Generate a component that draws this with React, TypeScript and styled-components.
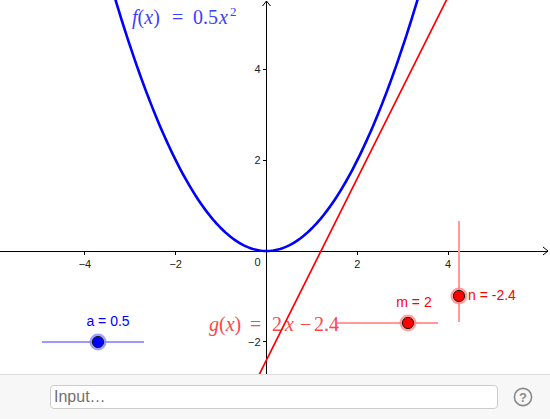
import styled, { createGlobalStyle } from "styled-components";

const GlobalStyle = createGlobalStyle`
  html, body {
    margin: 0;
    padding: 0;
    background: #ffffff;
  }
  body {
    font-family: "Liberation Sans", Arial, sans-serif;
  }
`;

// graphics view coordinate system
const W = 550;
const H = 374;
const OX = 266.5;
const OY = 251;
const U = 45.4;

const px = (x: number) => OX + x * U;
const py = (y: number) => OY - y * U;

const parabolaPath = () => {
  const pts: string[] = [];
  for (let x = -3.5; x <= 3.5001; x += 0.05) {
    pts.push(`${px(x).toFixed(2)},${py(0.5 * x * x).toFixed(2)}`);
  }
  return "M" + pts.join(" L");
};

const xTicks = [-4, -2, 2, 4];
const yTicks = [4, 2, -2];

const label = (n: number) => (n < 0 ? `\u2212${-n}` : `${n}`);

export default function App() {
  return (
    <>
      <GlobalStyle />
      <Applet>
        <GraphicsView>
          <Canvas width={W} height={H} viewBox={`0 0 ${W} ${H}`}>
            {/* axes */}
            <AxisLine x1={0} y1={OY} x2={W - 2} y2={OY} />
            <AxisLine x1={OX} y1={H} x2={OX} y2={1} />
            <AxisArrow d={`M${W - 7},${OY - 4} L${W - 2},${OY} L${W - 7},${OY + 4}`} />
            <AxisArrow d={`M${OX - 4},6 L${OX},1 L${OX + 4},6`} />

            {xTicks.map((t) => (
              <g key={`x${t}`}>
                <AxisLine x1={px(t)} y1={OY} x2={px(t)} y2={OY + 4} />
                <TickLabel x={px(t)} y={OY + 17} textAnchor="middle">
                  {label(t)}
                </TickLabel>
              </g>
            ))}
            {yTicks.map((t) => (
              <g key={`y${t}`}>
                <AxisLine x1={OX - 4} y1={py(t)} x2={OX} y2={py(t)} />
                <TickLabel x={OX - 6} y={py(t) + 4} textAnchor="end">
                  {label(t)}
                </TickLabel>
              </g>
            ))}
            <TickLabel x={OX - 6} y={OY + 15} textAnchor="end">
              0
            </TickLabel>

            {/* f(x) = 0.5 x^2 */}
            <Curve d={parabolaPath()} $color="#0000ff" $width={2.6} />
            <MathLabel y={24} $color="#3d3dff">
              <tspan x={132} fontStyle="italic">f</tspan>
              <tspan>(</tspan>
              <tspan fontStyle="italic">x</tspan>
              <tspan>)</tspan>
              <tspan x={172}>=</tspan>
              <tspan x={193}>0.5</tspan>
              <tspan x={219} fontStyle="italic">x</tspan>
              <tspan x={230} fontSize="13" dy="-8">
                2
              </tspan>
            </MathLabel>

            {/* g(x) = m x + n */}
            <MathLabel y={331} $color="#ff4545">
              <tspan x={209} fontStyle="italic">g</tspan>
              <tspan>(</tspan>
              <tspan fontStyle="italic">x</tspan>
              <tspan>)</tspan>
              <tspan x={250}>=</tspan>
              <tspan x={272}>2</tspan>
              <tspan x={285} fontStyle="italic">x</tspan>
              <tspan x={300}>−</tspan>
              <tspan x={314}>2.4</tspan>
            </MathLabel>
            <Curve
              d={`M${px(4.05)},${py(2 * 4.05 - 2.4)} L${px(-0.25)},${py(2 * -0.25 - 2.4)}`}
              $color="#ff0000"
              $width={1.7}
            />

            {/* slider a */}
            <SliderTrack x1={42} y1={342} x2={144} y2={342} $color="#9a9aff" />
            <SliderHalo cx={98} cy={342} r={8.5} $color="#7f7fff" />
            <SliderKnob cx={98} cy={342} r={5.6} $color="#0000ff" />
            <SliderLabel x={108} y={326} textAnchor="middle" $color="#0000ff">
              a = 0.5
            </SliderLabel>

            {/* slider m */}
            <SliderTrack x1={337} y1={323} x2={438} y2={323} $color="#ff9a9a" />
            <SliderHalo cx={408} cy={323} r={8.5} $color="#ff7f7f" />
            <SliderKnob cx={408} cy={323} r={5.6} $color="#ff0000" />
            <SliderLabel x={414} y={307} textAnchor="middle" $color="#ff0000">
              m = 2
            </SliderLabel>

            {/* slider n */}
            <SliderTrack x1={459} y1={221} x2={459} y2={322} $color="#ff9a9a" />
            <SliderHalo cx={459} cy={296} r={8.5} $color="#ff7f7f" />
            <SliderKnob cx={459} cy={296} r={5.6} $color="#ff0000" />
            <SliderLabel x={468} y={300} $color="#ff0000">
              n = -2.4
            </SliderLabel>
          </Canvas>
        </GraphicsView>

        <InputBar>
          <InputField type="text" placeholder="Input…" />
          <HelpButton aria-label="help">
            <svg width="20" height="20" viewBox="0 0 20 20">
              <circle cx="10" cy="10" r="8.6" fill="none" stroke="#8a8a8a" strokeWidth="1.6" />
              <text
                x="10"
                y="14.6"
                textAnchor="middle"
                fontSize="13"
                fontWeight="bold"
                fill="#8a8a8a"
                fontFamily="Liberation Sans, Arial, sans-serif"
              >
                ?
              </text>
            </svg>
          </HelpButton>
        </InputBar>
      </Applet>
    </>
  );
}

const Applet = styled.div`
  width: 550px;
  height: 419px;
  display: flex;
  flex-direction: column;
  overflow: hidden;
  background: #ffffff;
`;

const GraphicsView = styled.div`
  height: 374px;
  flex-shrink: 0;
  overflow: hidden;
`;

const Canvas = styled.svg`
  display: block;
`;

const AxisLine = styled.line`
  stroke: #000000;
  stroke-width: 1;
  shape-rendering: crispEdges;
`;

const AxisArrow = styled.path`
  fill: none;
  stroke: #000000;
  stroke-width: 1;
`;

const TickLabel = styled.text`
  font-family: "Liberation Sans", Arial, sans-serif;
  font-size: 11px;
  fill: #222222;
`;

const Curve = styled.path<{ $color: string; $width: number }>`
  fill: none;
  stroke: ${(p) => p.$color};
  stroke-width: ${(p) => p.$width};
  stroke-linecap: round;
`;

const MathLabel = styled.text<{ $color: string }>`
  font-family: "Liberation Serif", "Times New Roman", serif;
  font-size: 20px;
  fill: ${(p) => p.$color};
`;

const SliderTrack = styled.line<{ $color: string }>`
  stroke: ${(p) => p.$color};
  stroke-width: 2;
`;

const SliderHalo = styled.circle<{ $color: string }>`
  fill: ${(p) => p.$color};
  opacity: 0.75;
`;

const SliderKnob = styled.circle<{ $color: string }>`
  fill: ${(p) => p.$color};
  stroke: #1a1a1a;
  stroke-width: 1;
`;

const SliderLabel = styled.text<{ $color: string }>`
  font-family: "Liberation Sans", Arial, sans-serif;
  font-size: 14px;
  fill: ${(p) => p.$color};
`;

const InputBar = styled.div`
  flex: 1;
  display: flex;
  align-items: center;
  padding: 0 17px 0 50px;
  gap: 15px;
  background: #f7f7f7;
  border-top: 1px solid #dddddd;
`;

const InputField = styled.input`
  flex: 1;
  height: 24px;
  box-sizing: border-box;
  border: 1px solid #cccccc;
  border-radius: 4px;
  background: #ffffff;
  padding: 0 3px;
  font-family: "Liberation Sans", Arial, sans-serif;
  font-size: 16px;
  color: #333333;
  outline: none;

  &::placeholder {
    color: #707070;
  }
`;

const HelpButton = styled.div`
  width: 20px;
  height: 20px;
  display: flex;
  align-items: center;
  justify-content: center;
`;
